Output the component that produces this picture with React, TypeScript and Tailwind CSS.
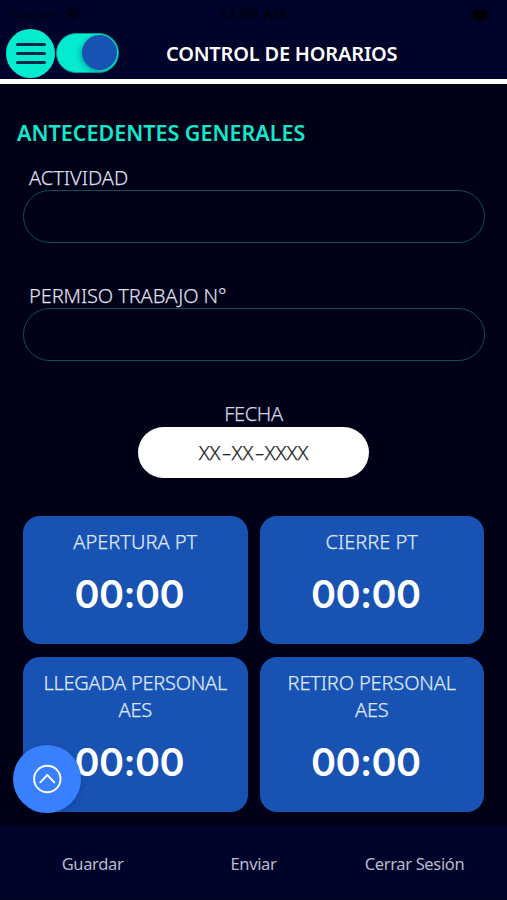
import { useState } from 'react';

interface TimeCardProps {
  lines: string[];
  labelClass: string;
  tall?: boolean;
}

function TimeCard({ lines, labelClass, tall }: TimeCardProps) {
  return (
    <button
      className={`flex flex-col items-center rounded-[17px] bg-[#1852b3] pt-[12px] ${
        tall ? 'h-[155px]' : 'h-[128px]'
      }`}
    >
      {lines.map((line) => (
        <span key={line} className={`block whitespace-nowrap text-[20px] leading-[27px] font-light text-[#dfe8fb] [-webkit-text-stroke:0.25px_#dfe8fb] ${labelClass}`}>
          {line}
        </span>
      ))}
      <span className="mt-[12px] mr-[12px] block font-['Inter',sans-serif] text-[38px] leading-[54px] font-semibold tracking-[-0.6px] text-white">
        00:00
      </span>
    </button>
  );
}

interface FieldProps {
  id: string;
  label: string;
  labelClass: string;
}

function Field({ id, label, labelClass }: FieldProps) {
  return (
    <div className="flex flex-col">
      <label htmlFor={id} className={`ml-[6px] h-[26px] text-[20px] leading-[28px] font-light text-[#dedee8] [-webkit-text-stroke:0.25px_#dedee8] ${labelClass}`}>
        {label}
      </label>
      <input
        id={id}
        className="h-[53px] w-[462px] rounded-full border border-[#0b5155] bg-transparent px-6 text-white outline-none"
      />
    </div>
  );
}

export default function App() {
  const [enabled, setEnabled] = useState(true);

  return (
    <div className="relative flex h-[900px] w-[507px] flex-col overflow-hidden bg-[#000116] font-['Noto_Sans',sans-serif]">
      <header className="h-[84px] shrink-0 border-b-[5px] border-white bg-[#00042b]">
        {/* Status bar */}
        <div className="grid h-[29px] grid-cols-3 items-center px-[9px] text-[15px] leading-[28px] text-[#01010f]">
          <div className="flex items-center gap-[7px]">
            <span className="font-['Inter',sans-serif] text-[14px] tracking-[0.3px]">Carrier</span>
            <svg className="h-[13px] w-[18px]" viewBox="0 0 18 13" fill="none" stroke="currentColor" strokeWidth="2.6">
              <path d="M1 4.6a11.4 11.4 0 0 1 16 0" />
              <path d="M4 8a7 7 0 0 1 10 0" />
              <path d="M9 12.6 6.4 9.8a3.8 3.8 0 0 1 5.2 0Z" fill="currentColor" stroke="none" />
            </svg>
          </div>
          <span className="text-center font-['Inter',sans-serif] text-[14.5px] font-semibold whitespace-nowrap">12:59 AM</span>
          <div className="mr-[11px] h-[10px] w-[14px] justify-self-end rounded-[3px] bg-[#000006]" />
        </div>

        <div className="flex h-[49px] items-center pl-[6px]">
          <button aria-label="Menu" className="flex size-[49px] shrink-0 flex-col items-center justify-center gap-[6px] rounded-full bg-[#05ebd0]">
            <span className="h-[3px] w-[30px] rounded-full bg-[#04264a]" />
            <span className="h-[3px] w-[30px] rounded-full bg-[#04264a]" />
            <span className="h-[3px] w-[30px] rounded-full bg-[#04264a]" />
          </button>
          <button
            role="switch"
            aria-checked={enabled}
            aria-label="Modo"
            onClick={() => setEnabled(!enabled)}
            className={`-mt-[2px] ml-[1px] flex h-[40px] w-[63px] shrink-0 items-center rounded-full border border-[#069c9c] bg-[#05ebd0] px-[1px] ${
              enabled ? 'justify-end' : 'justify-start'
            }`}
          >
            <span className="size-[35px] rounded-full bg-[#1852b3] shadow-[-2px_2px_5px_rgba(0,60,80,0.35)]" />
          </button>
          <h1 className="ml-[47px] text-[20px] leading-[28px] font-[650] tracking-[-0.2px] whitespace-nowrap text-white">
            CONTROL DE HORARIOS
          </h1>
        </div>
      </header>

      <main className="flex flex-1 flex-col px-[23px]">
        <h2 className="mt-[34px] -ml-[6px] text-[21.5px] leading-[30px] font-[650] whitespace-nowrap text-[#12e8cb]">
          ANTECEDENTES GENERALES
        </h2>

        <div className="mt-[16px] flex flex-col gap-[39px]">
          <Field id="actividad" label="ACTIVIDAD" labelClass="tracking-[0px]" />
          <Field id="permiso" label="PERMISO TRABAJO N°" labelClass="tracking-[-0.1px]" />
        </div>

        <div className="mt-[40px] flex flex-col items-center">
          <span className="h-[26px] text-[20px] leading-[26px] font-light tracking-[-0.4px] text-[#d2d2e4] [-webkit-text-stroke:0.25px_#d2d2e4]">FECHA</span>
          <button className="h-[51px] w-[231px] rounded-full bg-white text-[20px] leading-[51px] font-light text-[#222] [-webkit-text-stroke:0.25px_#222]">
            XX<span className="mx-px inline-block w-[9px] scale-x-150">-</span>XX<span className="mx-px inline-block w-[9px] scale-x-150">-</span>XXXX
          </button>
        </div>

        <div className="mt-[38px] grid grid-cols-2 gap-x-[12px] gap-y-[13px]">
          <TimeCard lines={['APERTURA PT']} labelClass="tracking-[0px]" />
          <TimeCard lines={['CIERRE PT']} labelClass="tracking-[0px]" />
          <TimeCard lines={['LLEGADA PERSONAL', 'AES']} labelClass="tracking-[-0.25px]" tall />
          <TimeCard lines={['RETIRO PERSONAL', 'AES']} labelClass="tracking-[-0.15px]" tall />
        </div>
      </main>

      <footer className="grid h-[74px] shrink-0 grid-cols-3 items-center border-b border-[#000116] bg-[#00042b] px-[12px] pt-[3px] text-center text-[16.5px] tracking-[-0.35px] text-[#b9bacb]">
        <button>Guardar</button>
        <button>Enviar</button>
        <button>Cerrar Sesión</button>
      </footer>

      {/* Scroll to top */}
      <button
        aria-label="Subir"
        className="absolute top-[745px] left-[13px] flex size-[68px] items-center justify-center rounded-full bg-[#3880ff] text-white shadow-[0_2px_6px_rgba(0,0,0,0.15)]"
      >
        <svg className="size-[30px]" viewBox="0 0 30 30" fill="none" stroke="currentColor" strokeWidth="1.9" strokeLinecap="round" strokeLinejoin="round">
          <circle cx="15.3" cy="15" r="13.2" />
          <path d="m8.3 18.3 7-7.3 7 7.3" />
        </svg>
      </button>
    </div>
  );
}
